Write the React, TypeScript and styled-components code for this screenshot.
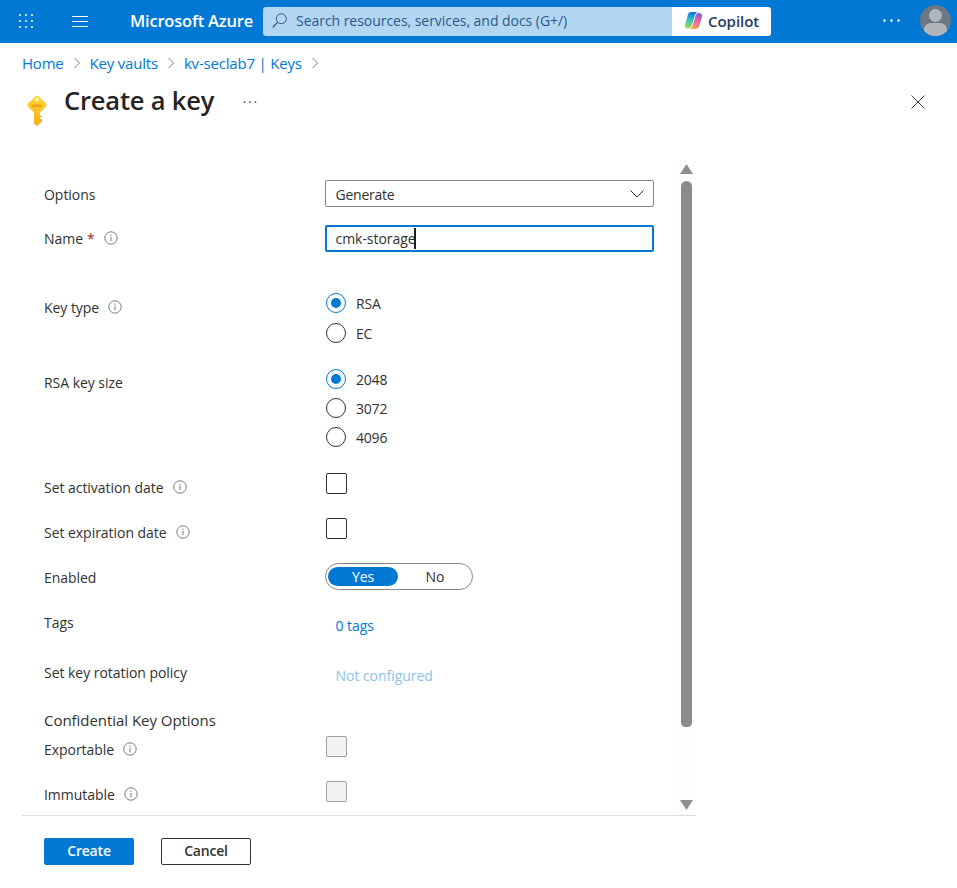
import React from "react";
import styled, { createGlobalStyle } from "styled-components";

const GlobalStyle = createGlobalStyle`
  html, body {
    margin: 0;
    padding: 0;
    background: #fff;
  }
  body {
    font-family: "Open Sans", "Noto Sans", "Liberation Sans", sans-serif;
    font-size: 14px;
    letter-spacing: -0.04px;
    color: #323130;
  }
`;

const Page = styled.div`
  width: 957px;
  height: 888px;
  overflow: hidden;
`;

const TopBar = styled.header`
  height: 43px;
  background: #0078d4;
  display: flex;
  align-items: center;
`;

const BarIcon = styled.button<{ $w: number; $lift?: number }>`
  width: ${(p) => p.$w}px;
  height: 43px;
  padding: 0 0 ${(p) => p.$lift || 0}px;
  border: none;
  background: none;
  display: flex;
  align-items: center;
  justify-content: center;
`;

const Brand = styled.div`
  margin-left: 22px;
  width: 133px;
  padding-bottom: 2px;
  color: #fff;
  font-size: 16.5px;
  font-weight: 600;
  letter-spacing: -0.2px;
  white-space: nowrap;
`;

const SearchBox = styled.div`
  width: 409px;
  height: 29px;
  margin-top: -1px;
  padding: 0 0 2px 9px;
  background: #b3d6f2;
  border-radius: 3px 0 0 3px;
  display: flex;
  align-items: center;
  gap: 9px;
  box-sizing: border-box;
  color: #2b5a88;
  white-space: nowrap;
`;

const CopilotButton = styled.div`
  width: 99px;
  height: 29px;
  margin-top: -1px;
  padding: 0 0 1px 12px;
  background: #fff;
  border-radius: 0 3px 3px 0;
  display: flex;
  align-items: center;
  gap: 5px;
  box-sizing: border-box;
  color: #243a5e;
  font-size: 15px;
  font-weight: 600;
`;

const BarRight = styled.div`
  margin-left: auto;
  display: flex;
  align-items: center;
  gap: 20px;
  padding: 0 6px 2px 0;
`;

const Crumbs = styled.nav`
  display: flex;
  align-items: center;
  height: 20px;
  margin: 10px 0 0 22px;
  font-size: 15px;
  letter-spacing: -0.2px;
`;

const CrumbLink = styled.a`
  color: #0078d4;
  white-space: nowrap;
`;

const CrumbChevron = styled.svg`
  width: 8px;
  height: 12px;
  margin: 0 9px 0 9px;
`;

const TitleRow = styled.div`
  display: flex;
  align-items: flex-start;
  height: 82px;
  margin-top: 5px;
  padding-left: 27px;
  padding-right: 32px;
`;

const KeyGlyph = styled.svg`
  width: 20px;
  height: 31px;
  margin-top: 17px;
  flex: none;
`;

const Title = styled.h1`
  margin: 4px 0 0 17px;
  font-size: 25.5px;
  line-height: 36px;
  font-weight: 600;
  letter-spacing: -0.18px;
  color: #252423;
`;

const TitleMore = styled.svg`
  width: 14px;
  height: 4px;
  margin: 22px 0 0 29px;
`;

const CloseIcon = styled.svg`
  width: 14px;
  height: 14px;
  margin: 17px 0 0 auto;
`;

const Body = styled.div`
  display: flex;
  height: 655px;
  margin-left: 22px;
  width: 674px;
`;

const Form = styled.form`
  width: 655px;
  padding: 20px 0 0 22px;
  box-sizing: border-box;
`;

const Row = styled.div<{ $h: number }>`
  display: grid;
  grid-template-columns: 281px 329px;
  height: ${(p) => p.$h}px;
`;

const Label = styled.div<{ $top: number }>`
  display: flex;
  align-items: center;
  height: 20px;
  margin-top: ${(p) => p.$top}px;
  white-space: nowrap;
`;

const Required = styled.span`
  color: #a4262c;
  margin-left: 4px;
`;

const InfoIcon = styled.svg`
  width: 14px;
  height: 14px;
  margin-left: 9px;
`;

const Select = styled.div`
  height: 27px;
  box-sizing: border-box;
  border: 1px solid #8a8886;
  border-radius: 2px;
  display: flex;
  align-items: center;
  justify-content: space-between;
  padding: 1px 9px 0 9.5px;
  letter-spacing: -0.25px;
`;

const TextInput = styled.div`
  height: 27px;
  box-sizing: border-box;
  border: 2px solid #0078d4;
  border-radius: 2px;
  display: flex;
  align-items: center;
  padding-left: 8.5px;
`;

const Caret = styled.span`
  width: 2px;
  height: 21px;
  margin-left: -2px;
  background: #201f1e;
`;

const RadioGroup = styled.div<{ $gap: number; $top: number }>`
  display: flex;
  flex-direction: column;
  gap: ${(p) => p.$gap}px;
  margin-top: ${(p) => p.$top}px;
  padding-left: 1px;
  letter-spacing: -0.2px;
`;

const RadioRow = styled.div`
  display: flex;
  align-items: center;
  gap: 10px;
  height: 20px;
`;

const RadioDot = styled.span<{ $on?: boolean }>`
  width: 20px;
  height: 20px;
  box-sizing: border-box;
  border-radius: 50%;
  border: 1px solid ${(p) => (p.$on ? "#0078d4" : "#323130")};
  display: flex;
  align-items: center;
  justify-content: center;
  &::after {
    content: "";
    display: ${(p) => (p.$on ? "block" : "none")};
    width: 10px;
    height: 10px;
    border-radius: 50%;
    background: #0078d4;
  }
`;

const Checkbox = styled.span<{ $disabled?: boolean }>`
  display: block;
  width: 21px;
  height: 21px;
  box-sizing: border-box;
  margin-left: 1px;
  border-radius: 2px;
  border: 1px solid ${(p) => (p.$disabled ? "#a19f9d" : "#323130")};
  background: ${(p) => (p.$disabled ? "#f3f2f1" : "#fff")};
`;

const Toggle = styled.div`
  width: 148px;
  height: 27px;
  box-sizing: border-box;
  border: 1px solid #8a8886;
  border-radius: 14px;
  padding: 3px 2px;
  display: flex;
  align-items: center;
`;

const ToggleOption = styled.span<{ $on?: boolean }>`
  width: 70px;
  height: 19px;
  line-height: 19px;
  text-align: center;
  border-radius: 10px;
  background: ${(p) => (p.$on ? "#0078d4" : "transparent")};
  color: ${(p) => (p.$on ? "#fff" : "#323130")};
  & + & {
    margin-left: 2px;
  }
`;

const ValueLink = styled.a<{ $muted?: boolean }>`
  display: block;
  margin: 8px 0 0 10.5px;
  line-height: 20px;
  color: ${(p) => (p.$muted ? "#8dc2ea" : "#0078d4")};
`;

const SectionTitle = styled.div`
  height: 33px;
  padding-top: 7px;
  box-sizing: border-box;
  font-size: 15px;
  line-height: 20px;
`;

const Scrollbar = styled.div`
  width: 19px;
  background: #fdfdfd;
  display: flex;
  flex-direction: column;
  align-items: center;
  padding: 4px 0 5px;
  box-sizing: border-box;
`;

const ScrollThumb = styled.div`
  width: 11px;
  height: 546px;
  margin-top: 7px;
  border-radius: 6px 6px 5px 5px;
  background: #8b8b8b;
`;

const ScrollArrow = styled.svg<{ $down?: boolean }>`
  width: 13px;
  height: 10px;
  margin-top: ${(p) => (p.$down ? "auto" : "0")};
`;

const Footer = styled.footer`
  width: 674px;
  margin-left: 22px;
  border-top: 1px solid #dcdcdc;
  padding: 22px 0 0 22px;
  box-sizing: border-box;
  display: flex;
  gap: 27px;
`;

const Button = styled.button<{ $primary?: boolean }>`
  width: 90px;
  height: 27px;
  padding: 0 0 2px;
  box-sizing: border-box;
  border: 1px solid ${(p) => (p.$primary ? "#0078d4" : "#323130")};
  border-radius: 2px;
  background: ${(p) => (p.$primary ? "#0078d4" : "#fff")};
  color: ${(p) => (p.$primary ? "#fff" : "#323130")};
  font: inherit;
  font-weight: 600;
  letter-spacing: -0.2px;
`;

const Info = () => (
  <InfoIcon viewBox="0 0 14 14" fill="none">
    <circle cx="7" cy="7" r="6.2" stroke="#7a7a7a" />
    <path d="M7 6v4.2" stroke="#7a7a7a" />
    <circle cx="7" cy="4.2" r="0.7" fill="#7a7a7a" />
  </InfoIcon>
);

const Chevron = () => (
  <CrumbChevron viewBox="0 0 8 12" fill="none">
    <path d="M1.5 1l5 5-5 5" stroke="#7f7d7b" />
  </CrumbChevron>
);

const WaffleIcon = () => (
  <svg width="14" height="14" viewBox="0 0 14 14" fill="#fff">
    {[1, 7, 13].flatMap((y) =>
      [1, 7, 13].map((x) => <circle key={`${x}-${y}`} cx={x} cy={y} r="1" />)
    )}
  </svg>
);

const MenuIcon = () => (
  <svg width="16" height="11" viewBox="0 0 16 11" stroke="#fff">
    <path d="M0 .5h16M0 5.5h16M0 10.5h16" />
  </svg>
);

const SearchIcon = () => (
  <svg width="15" height="15" viewBox="0 0 15 15" fill="none" stroke="#2b5a88">
    <circle cx="9.3" cy="5.7" r="5" />
    <path d="M5.6 9.4L.7 14.3" strokeWidth="1.3" />
  </svg>
);

const CopilotIcon = () => (
  <svg width="19" height="19" viewBox="0 0 18 18">
    <defs>
      <linearGradient id="cpA" x1="0.5" y1="0" x2="0.3" y2="1">
        <stop offset="0" stopColor="#1a6be0" />
        <stop offset="0.45" stopColor="#2cc3cf" />
        <stop offset="1" stopColor="#a9d84a" />
      </linearGradient>
      <linearGradient id="cpB" x1="0.8" y1="0" x2="0.3" y2="1">
        <stop offset="0" stopColor="#6a5ee8" />
        <stop offset="0.45" stopColor="#ee5fa8" />
        <stop offset="1" stopColor="#f9a63e" />
      </linearGradient>
    </defs>
    <path
      d="M7 1h5.500c-1.200.8-1.800 2-2.300 3.600L7.600 13c-.6 2.300-2 3.500-4.100 3.500C1.500 16.500.5 15 1 13l2.500-9C4 2 5 1 7 1z"
      fill="url(#cpA)"
    />
    <path
      d="M14 1.800c2.200 0 3.500 1.600 3 3.700l-2.500 8.500c-.6 2-2 3-4 3H5.300c1.600-.7 2.500-2 3.100-4l2.600-8.500c.5-1.700 1.400-2.700 3-2.700z"
      fill="url(#cpB)"
    />
  </svg>
);

const BarMoreIcon = () => (
  <svg width="17" height="3" viewBox="0 0 17 3" fill="#fff">
    <circle cx="1.5" cy="1.5" r="1.2" />
    <circle cx="8.5" cy="1.5" r="1.2" />
    <circle cx="15.5" cy="1.5" r="1.2" />
  </svg>
);

const AvatarIcon = () => (
  <svg width="31" height="31" viewBox="0 0 31 31">
    <defs>
      <clipPath id="avatarClip">
        <circle cx="15.5" cy="15.5" r="15.5" />
      </clipPath>
    </defs>
    <circle cx="15.5" cy="15.5" r="15.5" fill="#6b7785" />
    <g clipPath="url(#avatarClip)" fill="#b2b6ba">
      <circle cx="15.5" cy="10.5" r="6.5" />
      <path d="M4 31v-6c0-4 3-7 7-7h9c4 0 7 3 7 7v6z" />
    </g>
  </svg>
);

const KeyIcon = () => (
  <KeyGlyph viewBox="0 0 20 31">
    <defs>
      <linearGradient id="keyFill" x1="0" y1="0" x2="0" y2="1">
        <stop offset="0" stopColor="#ffd83a" />
        <stop offset="1" stopColor="#f8ac14" />
      </linearGradient>
    </defs>
    <path
      d="M8.600 1Q10 0 11.400 1L19 8.600Q20 10 19 11.400L13 17.500V20.500H15V22.500H13V24H15V26.500L10 31 7 28.500V17.500L1 11.400Q0 10 1 8.600Z"
      fill="url(#keyFill)"
    />
    <circle cx="10" cy="4.800" r="2" fill="#fff2b8" />
    <rect x="4.500" y="9.500" width="11" height="2.500" rx="1" fill="#eda70f" />
  </KeyGlyph>
);

const App = () => {
  return (
    <Page>
      <GlobalStyle />
      <TopBar>
        <BarIcon $w={52} $lift={2}>
          <WaffleIcon />
        </BarIcon>
        <BarIcon $w={56}>
          <MenuIcon />
        </BarIcon>
        <Brand>Microsoft Azure</Brand>
        <SearchBox>
          <SearchIcon />
          Search resources, services, and docs (G+/)
        </SearchBox>
        <CopilotButton>
          <CopilotIcon />
          Copilot
        </CopilotButton>
        <BarRight>
          <BarMoreIcon />
          <AvatarIcon />
        </BarRight>
      </TopBar>

      <Crumbs>
        <CrumbLink>Home</CrumbLink>
        <Chevron />
        <CrumbLink>Key vaults</CrumbLink>
        <Chevron />
        <CrumbLink>kv-seclab7 | Keys</CrumbLink>
        <Chevron />
      </Crumbs>

      <TitleRow>
        <KeyIcon />
        <Title>Create a key</Title>
        <TitleMore viewBox="0 0 14 4" fill="#605e5c">
          <circle cx="1.5" cy="2" r="0.9" />
          <circle cx="7" cy="2" r="0.9" />
          <circle cx="12.500" cy="2" r="0.9" />
        </TitleMore>
        <CloseIcon viewBox="0 0 14 14" stroke="#484644" fill="none">
          <path d="M.5.5l13 13M13.500.5l-13 13" />
        </CloseIcon>
      </TitleRow>

      <Body>
        <Form>
          <Row $h={45}>
            <Label $top={4}>Options</Label>
            <Select>
              Generate
              <svg width="14" height="8" viewBox="0 0 14 8" fill="none" stroke="#323130">
                <path d="M.5.5L7 7 13.500.5" />
              </svg>
            </Select>
          </Row>
          <Row $h={64}>
            <Label $top={3}>
              Name<Required>*</Required>
              <Info />
            </Label>
            <TextInput>
              cmk-storage
              <Caret />
            </TextInput>
          </Row>
          <Row $h={80}>
            <Label $top={8}>
              Key type
              <Info />
            </Label>
            <RadioGroup $gap={10} $top={4}>
              <RadioRow>
                <RadioDot $on />
                RSA
              </RadioRow>
              <RadioRow>
                <RadioDot />
                EC
              </RadioRow>
            </RadioGroup>
          </Row>
          <Row $h={104}>
            <Label $top={3}>RSA key size</Label>
            <RadioGroup $gap={9} $top={0}>
              <RadioRow>
                <RadioDot $on />
                2048
              </RadioRow>
              <RadioRow>
                <RadioDot />
                3072
              </RadioRow>
              <RadioRow>
                <RadioDot />
                4096
              </RadioRow>
            </RadioGroup>
          </Row>
          <Row $h={45}>
            <Label $top={4}>
              Set activation date
              <Info />
            </Label>
            <Checkbox />
          </Row>
          <Row $h={45}>
            <Label $top={4}>
              Set expiration date
              <Info />
            </Label>
            <Checkbox />
          </Row>
          <Row $h={45}>
            <Label $top={4}>Enabled</Label>
            <Toggle>
              <ToggleOption $on>Yes</ToggleOption>
              <ToggleOption>No</ToggleOption>
            </Toggle>
          </Row>
          <Row $h={50}>
            <Label $top={4}>Tags</Label>
            <ValueLink>0 tags</ValueLink>
          </Row>
          <Row $h={45}>
            <Label $top={4}>Set key rotation policy</Label>
            <ValueLink $muted>Not configured</ValueLink>
          </Row>
          <SectionTitle>Confidential Key Options</SectionTitle>
          <Row $h={45}>
            <Label $top={3}>
              Exportable
              <Info />
            </Label>
            <Checkbox $disabled />
          </Row>
          <Row $h={30}>
            <Label $top={3}>
              Immutable
              <Info />
            </Label>
            <Checkbox $disabled />
          </Row>
        </Form>
        <Scrollbar>
          <ScrollArrow viewBox="0 0 13 10" fill="#8f8f8f">
            <path d="M6.500 0L13 10H0z" />
          </ScrollArrow>
          <ScrollThumb />
          <ScrollArrow $down viewBox="0 0 13 10" fill="#8f8f8f">
            <path d="M6.500 10L0 0h13z" />
          </ScrollArrow>
        </Scrollbar>
      </Body>

      <Footer>
        <Button $primary>Create</Button>
        <Button>Cancel</Button>
      </Footer>
    </Page>
  );
};

export default App;
